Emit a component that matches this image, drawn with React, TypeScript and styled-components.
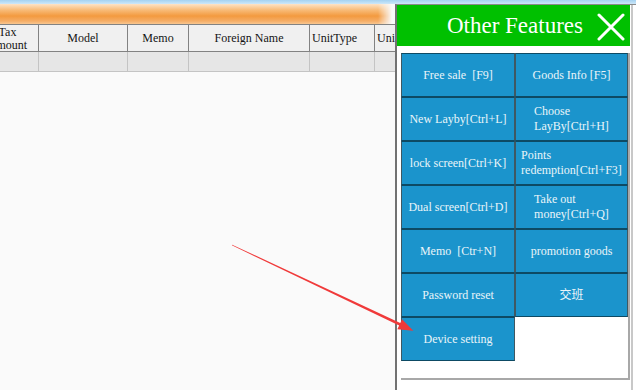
import React from "react";
import styled, { createGlobalStyle } from "styled-components";

const Global = createGlobalStyle`
  html, body { margin: 0; padding: 0; background: #fafafa; }
  body { font-family: "Liberation Serif", "Times New Roman", serif; }
`;

const Window = styled.div`
  position: relative;
  width: 636px;
  height: 390px;
  overflow: hidden;
  display: flex;
  flex-direction: column;
  background: #fafafa;
`;

const TopStrip = styled.div`
  flex: none;
  height: 4px;
  background: linear-gradient(#a4d2f2, #cde7f8);
`;

const Body = styled.div`
  flex: 1;
  display: flex;
  min-height: 0;
`;

const Main = styled.div`
  flex: 1;
  min-width: 0;
  display: flex;
  flex-direction: column;
  overflow: hidden;
  background: #fafafa;
`;

const OrangeBar = styled.div`
  flex: none;
  height: 20px;
  margin-right: 3px;
  background: linear-gradient(to bottom, #fde3c6 0%, #f8bb78 30%, #f39a3f 60%, #f5ad66 85%, #f8c690 100%);
  -webkit-mask-image: linear-gradient(to right, #000 calc(100% - 14px), transparent);
  mask-image: linear-gradient(to right, #000 calc(100% - 14px), transparent);
`;

const Table = styled.div`
  flex: none;
  display: flex;
  flex-direction: column;
  margin-left: -23px;
  width: 600px;
`;

const HeadRow = styled.div`
  display: flex;
  height: 28px;
  box-sizing: border-box;
  background: #f0f0f0;
  border-top: 1px solid #828282;
  border-bottom: 1px solid #828282;
`;

const DataRow = styled.div`
  display: flex;
  height: 20px;
  box-sizing: border-box;
  background: #e6e6e6;
  border-bottom: 1px solid #c4c4c4;
`;

const HeadCell = styled.div<{ $w: number; $left?: boolean }>`
  flex: none;
  width: ${(p) => p.$w}px;
  box-sizing: border-box;
  border-right: 1px solid #828282;
  display: flex;
  align-items: center;
  justify-content: ${(p) => (p.$left ? "flex-start" : "center")};
  padding-left: ${(p) => (p.$left ? "2px" : "0")};
  padding-top: 1px;
  text-align: center;
  font-size: 12px;
  line-height: 13px;
  color: #141414;
  white-space: nowrap;
  overflow: hidden;
`;

const DataCell = styled.div<{ $w: number }>`
  flex: none;
  width: ${(p) => p.$w}px;
  box-sizing: border-box;
  border-right: 1px solid #c4c4c4;
`;

const Panel = styled.aside`
  flex: none;
  width: 241px;
  box-sizing: border-box;
  border-left: 2px solid #727272;
  border-top: 1px solid #8a8a8a;
  background: #fff;
  display: flex;
`;

const PanelInner = styled.div`
  width: 234px;
  border-right: 2px solid #c8c8c8;
  display: flex;
  flex-direction: column;
`;

const PanelHeader = styled.div`
  flex: none;
  width: 233px;
  height: 41px;
  background: #00c000;
  display: flex;
  align-items: center;
  justify-content: flex-end;
  gap: 14px;
  padding-right: 5px;
  box-sizing: border-box;
  color: #fff;
  font-size: 23px;
`;

const Title = styled.span`
  line-height: 1;
  margin-top: -1px;
`;

const CloseIcon = styled.svg`
  width: 28px;
  height: 28px;
  margin-top: 3px;
`;

const PanelBody = styled.div`
  flex: 1;
  padding: 7px 0 0 4px;
`;

const Box = styled.div`
  width: 229px;
  height: 327px;
  box-sizing: border-box;
  border-right: 2px solid #a8a8a8;
  border-bottom: 2px solid #a8a8a8;
  background: #fff;
`;

const Grid = styled.div`
  display: grid;
  grid-template-columns: 114px 113px;
  grid-auto-rows: 44px;
`;

const FeatureButton = styled.button`
  box-sizing: border-box;
  margin: 0;
  padding: 0 4px;
  border: 1px solid #0d4a64;
  border-left-color: #3f5862;
  border-right-color: #3f5862;
  background: #1b94cc;
  color: #eaf4f9;
  font-family: "Liberation Serif", "Noto Sans CJK SC", serif;
  font-size: 12px;
  line-height: 15px;
  display: flex;
  align-items: center;
  justify-content: center;
  cursor: pointer;
`;

const Label = styled.span`
  display: inline-block;
  text-align: left;
  white-space: pre;
`;

const Overlay = styled.svg`
  position: absolute;
  left: 0;
  top: 0;
  width: 636px;
  height: 390px;
  pointer-events: none;
`;

const columns: { label: React.ReactNode; w: number; left?: boolean }[] = [
  { label: (<>Tax<br />Amount</>), w: 62 },
  { label: "Model", w: 89 },
  { label: "Memo", w: 61 },
  { label: "Foreign Name", w: 121 },
  { label: "UnitType", w: 65, left: true },
  { label: "UnitPrice", w: 80, left: true },
];

const features: string[][] = [
  ["Free sale  [F9]"],
  ["Goods Info [F5]"],
  ["New Layby[Ctrl+L]"],
  ["Choose", "LayBy[Ctrl+H]"],
  ["lock screen[Ctrl+K]"],
  ["Points", "redemption[Ctrl+F3]"],
  ["Dual screen[Ctrl+D]"],
  ["Take out", "money[Ctrl+Q]"],
  ["Memo  [Ctr+N]"],
  ["promotion goods"],
  ["Password reset"],
  ["交班"],
  ["Device setting"],
];

export default function App() {
  return (
    <>
      <Global />
      <Window>
        <TopStrip />
        <Body>
          <Main>
            <OrangeBar />
            <Table>
              <HeadRow>
                {columns.map((c, i) => (
                  <HeadCell key={i} $w={c.w} $left={c.left}>
                    {c.label}
                  </HeadCell>
                ))}
              </HeadRow>
              <DataRow>
                {columns.map((c, i) => (
                  <DataCell key={i} $w={c.w} />
                ))}
              </DataRow>
            </Table>
          </Main>
          <Panel>
            <PanelInner>
              <PanelHeader>
                <Title>Other Features</Title>
                <CloseIcon viewBox="0 0 28 28">
                  <path d="M2 2 L26 26 M26 2 L2 26" stroke="#fff" strokeWidth="3" strokeLinecap="round" fill="none" />
                </CloseIcon>
              </PanelHeader>
              <PanelBody>
                <Box>
                  <Grid>
                    {features.map((lines, i) => (
                      <FeatureButton key={i}>
                        <Label>
                          {lines.map((l, j) => (
                            <React.Fragment key={j}>
                              {j > 0 && <br />}
                              {l}
                            </React.Fragment>
                          ))}
                        </Label>
                      </FeatureButton>
                    ))}
                  </Grid>
                </Box>
              </PanelBody>
            </PanelInner>
          </Panel>
        </Body>
        <Overlay viewBox="0 0 636 390">
          <polygon
            points="232.17,244.64 400.26,323.1 402.05,319.3 413.3,330.7 397.35,329.3 399.15,325.5 231.83,245.36"
            fill="#f03a3a"
          />
        </Overlay>
      </Window>
    </>
  );
}
